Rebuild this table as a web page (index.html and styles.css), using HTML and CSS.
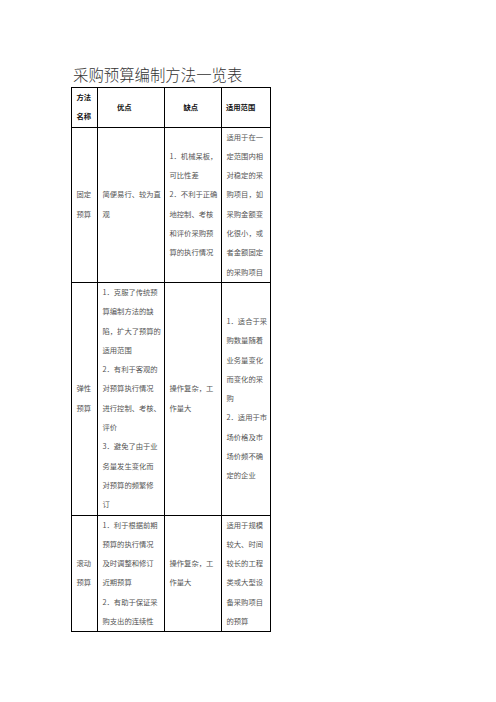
FILE: index.html
```html
<!DOCTYPE html>
<html lang="zh-CN">
<head>
<meta charset="utf-8">
<title>采购预算编制方法一览表</title>
<link rel="stylesheet" href="styles.css">
</head>
<body>
<main class="page">
  <h1 class="title">采购预算编制方法一览表</h1>
  <table class="grid">
    <colgroup>
      <col class="c1"><col class="c2"><col class="c3"><col class="c4">
    </colgroup>
    <thead>
      <tr>
        <th class="h1">方法<br>名称</th>
        <th class="h2">优点</th>
        <th class="h3">缺点</th>
        <th class="h4">适用范围</th>
      </tr>
    </thead>
    <tbody>
      <tr>
        <td>固定<br>预算</td>
        <td>简便易行、较为直<br>观</td>
        <td>1．机械呆板，<br>可比性差<br>2．不利于正确<br>地控制、考核<br>和评价采购预<br>算的执行情况</td>
        <td>适用于在一<br>定范围内相<br>对稳定的采<br>购项目，如<br>采购金额变<br>化很小，或<br>者金额固定<br>的采购项目</td>
      </tr>
      <tr>
        <td>弹性<br>预算</td>
        <td>1．克服了传统预<br>算编制方法的缺<br>陷，扩大了预算的<br>适用范围<br>2．有利于客观的<br>对预算执行情况<br>进行控制、考核、<br>评价<br>3．避免了由于业<br>务量发生变化而<br>对预算的频繁修<br>订</td>
        <td>操作复杂，工<br>作量大</td>
        <td>1．适合于采<br>购数量随着<br>业务量变化<br>而变化的采<br>购<br>2．适用于市<br>场价格及市<br>场价频不确<br>定的企业</td>
      </tr>
      <tr>
        <td>滚动<br>预算</td>
        <td>1．利于根据前期<br>预算的执行情况<br>及时调整和修订<br>近期预算<br>2．有助于保证采<br>购支出的连续性</td>
        <td>操作复杂，工<br>作量大</td>
        <td>适用于规模<br>较大、时间<br>较长的工程<br>类或大型设<br>备采购项目<br>的预算</td>
      </tr>
    </tbody>
  </table>
</main>
</body>
</html>
```
FILE: styles.css
```css
html, body {
  margin: 0;
  padding: 0;
  background: #fff;
}

.page {
  padding: 64px 0 0 71px;
}

.title {
  margin: 0 0 3px 2px;
  font-family: "Noto Sans CJK SC", "Noto Sans", sans-serif;
  font-size: 15.4px;
  line-height: 20px;
  font-weight: 300;
  color: #333;
}

.grid {
  border-collapse: collapse;
  table-layout: fixed;
  width: 199px;
  font-family: "Noto Sans CJK SC", "Noto Sans", sans-serif;
  font-size: 7.3px;
  line-height: 19.3px;
  color: #555;
}

.c1 { width: 26px; }
.c2 { width: 67px; }
.c3 { width: 57px; }
.c4 { width: 49px; }

.grid th,
.grid td {
  border: 1px solid #000;
  padding: 0 0 0 4.5px;
  vertical-align: middle;
  white-space: nowrap;
  text-align: left;
  overflow: hidden;
}

.grid th {
  font-weight: 700;
  color: #111;
}

.grid th.h2 { padding-left: 19px; }
.grid th.h3 { padding-left: 18.5px; }
.grid th.h4 { padding-left: 4px; }
```
